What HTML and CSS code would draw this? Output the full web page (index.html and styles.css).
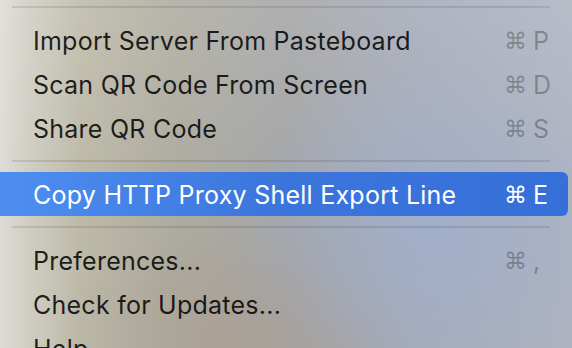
FILE: index.html
```html
<!DOCTYPE html>
<html>
<head>
  <title>Menu</title>
  <link rel="stylesheet" href="styles.css">
</head>
<body>
  <div class="menu">
    <div class="sep first"></div>
    <div class="item"><span class="label">Import Server From Pasteboard</span><span class="key"><span class="mod">⌘</span><span class="char">P</span></span></div>
    <div class="item"><span class="label">Scan QR Code From Screen</span><span class="key"><span class="mod">⌘</span><span class="char">D</span></span></div>
    <div class="item"><span class="label">Share QR Code</span><span class="key"><span class="mod">⌘</span><span class="char">S</span></span></div>
    <div class="sep"></div>
    <div class="item active"><span class="label">Copy HTTP Proxy Shell Export Line</span><span class="key"><span class="mod">⌘</span><span class="char">E</span></span></div>
    <div class="sep"></div>
    <div class="item"><span class="label">Preferences...</span><span class="key"><span class="mod">⌘</span><span class="char">,</span></span></div>
    <div class="item"><span class="label">Check for Updates...</span></div>
    <div class="item"><span class="label">Help</span></div>
  </div>
</body>
</html>
```

FILE: styles.css
```css
html, body { margin: 0; height: 348px; overflow: hidden; }
body {
  font-family: Inter, "Noto Sans", sans-serif;
  background:
    linear-gradient(to bottom, rgba(255,255,255,0.12), rgba(255,255,255,0) 55%),
    radial-gradient(ellipse 200px 160px at 430px 225px, rgba(160,176,208,0.7), rgba(160,176,208,0)),
    radial-gradient(ellipse 180px 120px at 230px 340px, rgba(170,156,142,0.6), rgba(170,156,142,0)),
    linear-gradient(to right, #dddcd6 0, #cfcdc2 30px, #bdbaa8 80px, #aeaba0 170px, #a4a5a6 290px, #a5abba 430px, #aeb3c0 572px);
}
.menu { padding-top: 1px; }
.sep { height: 22px; display: flex; align-items: center; padding: 0 22px 0 12px; }
.sep::before { content: ""; flex: 1; height: 2px; background: rgba(0,0,0,0.1); }
.sep.first { margin-top: -5px; }
.item { height: 44px; display: flex; align-items: center; padding-left: 33px; margin-right: 4px; font-size: 25px; color: rgba(0,0,0,0.86); }
.item .label { flex: 1; white-space: nowrap; letter-spacing: 0.25px; padding-top: 2px; }
.key { width: 64px; display: flex; align-items: center; color: rgba(0,0,0,0.28); padding-top: 2px; }
.mod { width: 29px; font-family: "DejaVu Sans", sans-serif; font-size: 23px; line-height: 1; }
.char { font-size: 25px; }
.item.active { background: linear-gradient(to right, #4e8ef1, #3b75dc 50%, #356fd8); border-radius: 0 6px 6px 0; color: #fff; }
.item.active .key { color: #fff; }
```
